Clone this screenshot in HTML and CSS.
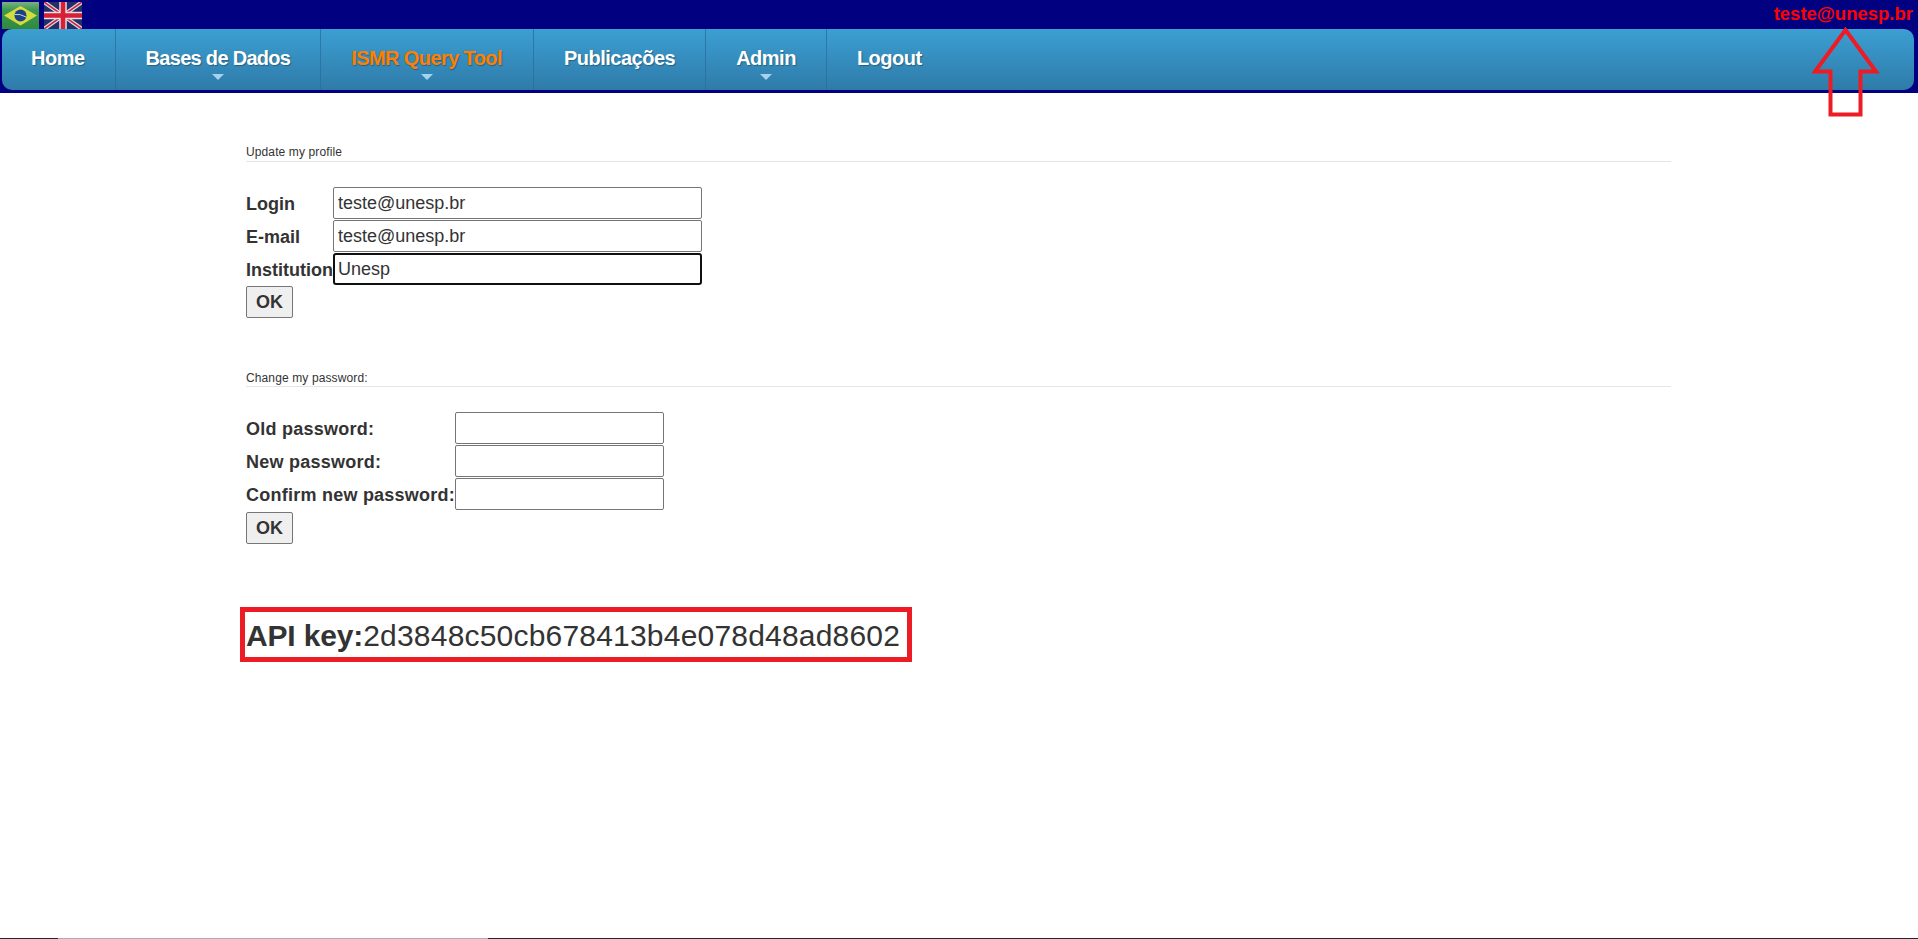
FILE: index.html
```html
<!DOCTYPE html>
<html lang="en">
<head>
<meta charset="utf-8">
<title>Update my profile</title>
<link rel="stylesheet" href="styles.css">
</head>
<body>
<div class="page">
  <header class="header">
    <div class="topbar">
      <div class="flags">
        <svg class="flag flag-br" viewBox="0 0 37 27" aria-label="Português">
          <defs>
            <linearGradient id="brg" x1="0" y1="0" x2="0" y2="1"><stop offset="0" stop-color="#7fae88"/><stop offset=".28" stop-color="#3f9a50"/><stop offset="1" stop-color="#2f8a3e"/></linearGradient>
          </defs>
          <rect width="37" height="27" fill="url(#brg)"/>
          <polygon points="18.5,4 35,13.5 18.500,23.500 2,13.5" fill="#d3dd3e"/>
          <circle cx="18.5" cy="13.5" r="6" fill="#1f3f86"/>
          <path d="M12.800 12.500 Q18 11.500 24 15" stroke="#c8d6d0" stroke-width="1" fill="none"/>
        </svg>
        <svg class="flag flag-uk" viewBox="0 0 38 27" aria-label="English">
          <rect width="38" height="27" fill="#242f68"/>
          <path d="M0 0 L38 27 M38 0 L0 27" stroke="#dcd8e2" stroke-width="4"/>
          <path d="M0 0 L38 27 M38 0 L0 27" stroke="#c9283e" stroke-width="1.6"/>
          <path d="M19 0 V27 M0 13.500 H38" stroke="#e8e2e8" stroke-width="7.500"/>
          <path d="M19 0 V27 M0 13.500 H38" stroke="#d81f36" stroke-width="4.600"/>
        </svg>
      </div>
      <a class="user" href="#">teste@unesp.br</a>
    </div>
    <nav class="nav">
      <a class="nav-item nav-home" href="#">Home</a>
      <a class="nav-item nav-bases has-sub" href="#">Bases de Dados</a>
      <a class="nav-item nav-ismr has-sub active" href="#">ISMR Query Tool</a>
      <a class="nav-item" href="#">Publicações</a>
      <a class="nav-item has-sub" href="#">Admin</a>
      <a class="nav-item nav-last" href="#">Logout</a>
    </nav>
  </header>

  <main class="main">
    <section class="section section-profile">
      <h2 class="legend">Update my profile</h2>
      <form class="form form-profile">
        <label class="label" for="login">Login</label>
        <input class="input input-wide" id="login" type="text" value="teste@unesp.br">
        <label class="label" for="email">E-mail</label>
        <input class="input input-wide" id="email" type="text" value="teste@unesp.br">
        <label class="label" for="inst">Institution</label>
        <input class="input input-wide input-focus" id="inst" type="text" value="Unesp">
        <button class="btn" type="button">OK</button>
      </form>
    </section>

    <section class="section section-password">
      <h2 class="legend">Change my password:</h2>
      <form class="form form-password">
        <label class="label" for="old">Old password:</label>
        <input class="input input-narrow" id="old" type="password">
        <label class="label" for="new">New password:</label>
        <input class="input input-narrow" id="new" type="password">
        <label class="label" for="conf">Confirm new password:</label>
        <input class="input input-narrow" id="conf" type="password">
        <button class="btn" type="button">OK</button>
      </form>
    </section>

    <p class="api"><strong class="api-label">API key:</strong><span class="api-value">2d3848c50cb678413b4e078d48ad8602</span></p>
  </main>

  <div class="strip"><span class="strip-dark"></span><span class="strip-gray"></span><span class="strip-dark"></span></div>

  <svg class="callout" viewBox="0 0 70 92" aria-hidden="true">
    <path d="M33.500 3 L3 44.500 H18.500 V87.500 H48.500 V44.500 H64 Z" fill="none" stroke="#ed1c24" stroke-width="4"/>
  </svg>
</div>
</body>
</html>
```

FILE: styles.css
```css
* { box-sizing: border-box; }

html, body {
  margin: 0;
  height: 100%;
  background: #fff;
}

body {
  font-family: "Liberation Sans", Arial, sans-serif;
  font-size: 18px;
  color: #333;
  overflow: hidden;
}

.page {
  position: relative;
  display: flex;
  flex-direction: column;
  height: 939px;
}

.header {
  background: #000080;
  padding-bottom: 3px;
}

.topbar {
  display: flex;
  justify-content: space-between;
  height: 29px;
  padding: 2px 5px 0 2px;
}

.flags {
  display: flex;
  gap: 5px;
}

.flag {
  display: block;
  height: 27px;
}

.flag-br { width: 37px; }
.flag-uk { width: 38px; }

.user {
  color: #f00;
  font-weight: bold;
  font-size: 18.5px;
  line-height: 23px;
  text-decoration: none;
}

.nav {
  display: flex;
  height: 61px;
  margin: 0 4px 0 2px;
  border-radius: 10px;
  background: linear-gradient(#3c9fd2, #2e7ba9);
}

.nav-item {
  position: relative;
  display: block;
  padding: 14px 30px 0;
  color: #fff;
  font-weight: bold;
  font-size: 20px;
  letter-spacing: -.5px;
  line-height: 30px;
  text-decoration: none;
  text-shadow: 1px 1px 1px rgba(0, 0, 0, .3);
  border-right: 1px solid rgba(40, 110, 155, .75);
}

.nav-home { padding-left: 29px; }
.nav-bases { letter-spacing: -.7px; }
.nav-ismr { letter-spacing: -.6px; padding-right: 31px; }
.nav-last { border-right: 0; }
.active { color: #ff8000; }

.has-sub::after {
  content: "";
  position: absolute;
  left: 50%;
  bottom: 10px;
  margin-left: -6px;
  border: 6px solid transparent;
  border-top-color: #a5d3ec;
  border-bottom-width: 0;
}

.main {
  flex: 1;
  padding: 50px 247px 0 246px;
}

.section-password { margin-top: 50px; }

.legend {
  margin: 0 0 25px;
  font-size: 12px;
  font-weight: normal;
  letter-spacing: .12px;
  line-height: 18px;
  height: 19px;
  border-bottom: 1px solid #e5e5e5;
}

.section-password .legend { line-height: 20px; }

.form {
  display: grid;
  row-gap: 1px;
  justify-content: start;
  align-items: center;
}

.form-profile { grid-template-columns: 87px max-content; }
.form-password { grid-template-columns: 209px max-content; }

.label {
  font-weight: bold;
  padding-top: 3px;
  white-space: nowrap;
}

.form-password .label { letter-spacing: .24px; }

.input {
  height: 32px;
  padding: 1px 4px 0;
  border: 1px solid #767676;
  border-radius: 2px;
  background: #fff;
  color: #333;
  font: 18px "Liberation Sans", Arial, sans-serif;
  outline: 0;
}

.input-wide { width: 369px; }
.input-narrow { width: 209px; }

.input-focus {
  border: 2px solid #101010;
  border-radius: 3px;
  padding: 1px 3px 0;
}

.btn {
  grid-column: 1;
  justify-self: start;
  width: 47px;
  height: 32px;
  padding: 0;
  border: 1px solid #767676;
  border-radius: 2px;
  background: #efefef;
  color: #333;
  font: bold 18px "Liberation Sans", Arial, sans-serif;
}

.form-password .btn { margin-top: 1px; }

.api {
  width: fit-content;
  margin: 63px 0 0 -6px;
  padding: 2px 7px 0 1px;
  border: 5px solid #ed1c24;
  font-size: 30px;
  line-height: 43px;
  color: #333;
}

.api-label { letter-spacing: -.15px; }
.api-value { letter-spacing: .2px; }

.strip {
  display: grid;
  grid-template-columns: 58px 430px 1fr;
  height: 1px;
}

.strip-dark { background: #26262a; }
.strip-gray { background: #aeaeae; }

.callout {
  position: absolute;
  left: 1812px;
  top: 27px;
  width: 70px;
  height: 92px;
}
```
